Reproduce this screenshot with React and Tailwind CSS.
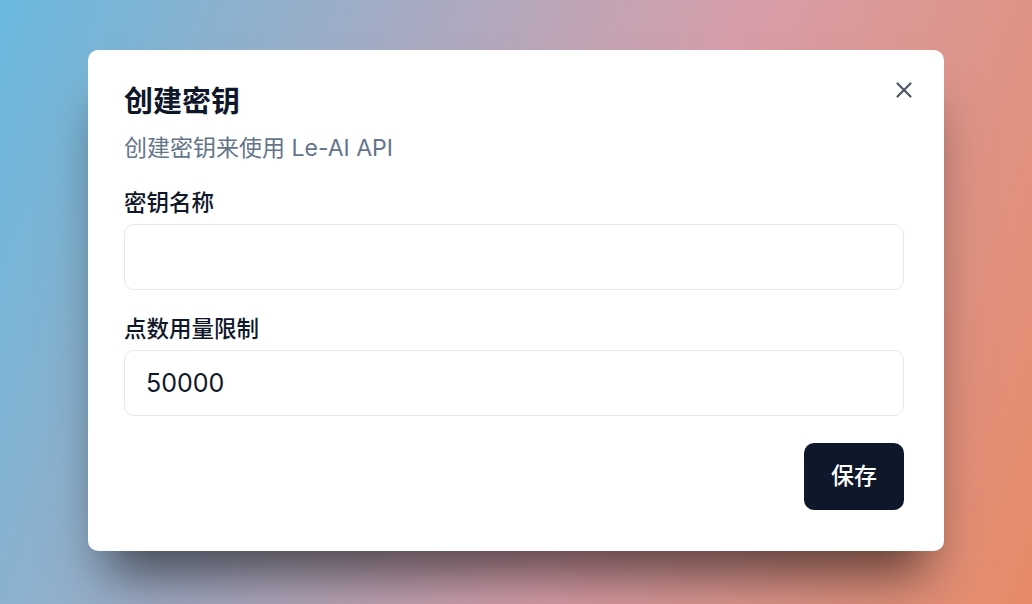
import { X } from 'lucide-react';

const font = { fontFamily: 'Inter, "Noto Sans CJK SC", sans-serif' };

export default function App() {
  return (
    <div
      className="min-h-screen w-full flex items-center justify-center bg-[linear-gradient(110deg,#69b9de_0%,#b3a8bd_40%,#d79ea9_60%,#e68b69_100%)]"
      style={font}
    >
      <div className="relative mb-[4px] w-[856px] h-[501px] bg-white rounded-[10px] shadow-[0_40px_50px_-18px_rgba(0,0,0,0.6)] pl-[36px] pr-[40px] pt-[36px] flex flex-col">
        <button className="absolute right-[27px] top-[27px] text-[#4b5563]">
          <X size={26} strokeWidth={2} />
        </button>

        <h2 className="text-[29px] leading-[32px] font-semibold text-[#0f172a]">创建密钥</h2>
        <p className="mt-[14px] text-[23px] leading-[32px] text-[#64748b]">创建密钥来使用 Le-AI API</p>

        <label className="mt-[23px] text-[22.5px] leading-[32px] font-medium text-[#0f172a]">密钥名称</label>
        <input
          className="mt-[5px] h-[66px] w-full rounded-[10px] border-[1.5px] border-[#e2e8f0] px-[21px] text-[25px] text-[#0f172a] outline-none"
          style={font}
        />

        <label className="mt-[23px] text-[22.5px] leading-[32px] font-medium text-[#0f172a]">点数用量限制</label>
        <input
          className="mt-[5px] h-[66px] w-full rounded-[10px] border-[1.5px] border-[#e2e8f0] px-[21px] text-[25px] text-[#0f172a] outline-none"
          defaultValue="50000"
          style={font}
        />

        <div className="mt-[27px] flex justify-end">
          <button className="w-[100px] h-[67px] rounded-[10px] bg-[#0f172a] text-white text-[23px] font-medium">保存</button>
        </div>
      </div>
    </div>
  );
}
